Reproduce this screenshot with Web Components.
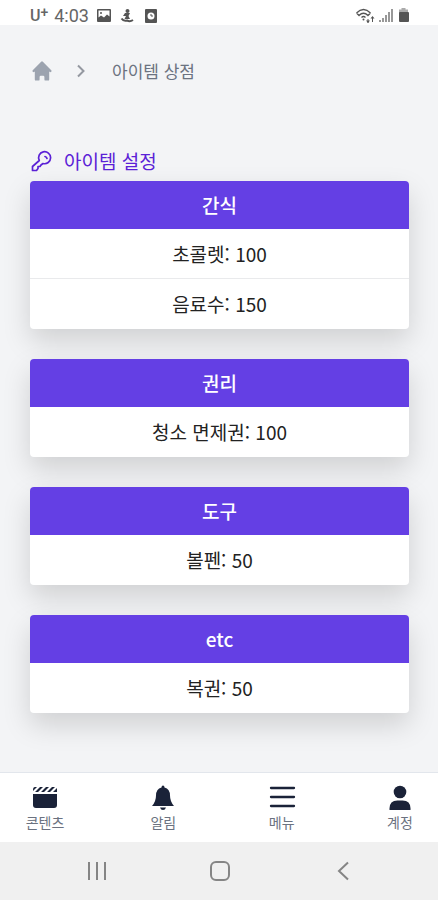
<!DOCTYPE html>
<html lang="ko">
<head>
<meta charset="utf-8">
<meta name="viewport" content="width=device-width, initial-scale=1">
<title>아이템 상점</title>
<style>
  body {
    margin: 0;
    font-family: 'Noto Sans CJK KR', sans-serif;
    color: #1f2937;
    background-color: #f3f4f6;
  }
</style>
</head>
<body>
<shop-app>
  <status-bar slot="top" carrier="U" time="4:03"></status-bar>
  <bread-crumb slot="crumb" page="아이템 상점"></bread-crumb>
  <section-title slot="title">아이템 설정</section-title>
  <item-card name="간식">
    <item-row>초콜렛: 100</item-row>
    <item-row>음료수: 150</item-row>
  </item-card>
  <item-card name="권리">
    <item-row>청소 면제권: 100</item-row>
  </item-card>
  <item-card name="도구">
    <item-row>볼펜: 50</item-row>
  </item-card>
  <item-card name="etc">
    <item-row>복권: 50</item-row>
  </item-card>
  <tab-bar slot="bottom">
    <tab-item icon="contents">콘텐츠</tab-item>
    <tab-item icon="bell">알림</tab-item>
    <tab-item icon="menu">메뉴</tab-item>
    <tab-item icon="user">계정</tab-item>
  </tab-bar>
  <system-bar slot="bottom"></system-bar>
</shop-app>

<script>
class BaseElement extends HTMLElement {
  constructor() {
    super();
    this.attachShadow({ mode: 'open' });
  }

  connectedCallback() {
    this.render();
  }
}

class ShopApp extends BaseElement {
  render() {
    this.shadowRoot.innerHTML = `
      <style>
        :host {
          display: flex;
          flex-direction: column;
          min-height: 100vh;
        }

        main {
          flex: 1;
          padding: 32px 29px 32px 30px;
        }

        .cards {
          display: flex;
          flex-direction: column;
          gap: 30px;
        }
      </style>
      <slot name="top"></slot>
      <main>
        <slot name="crumb"></slot>
        <slot name="title"></slot>
        <div class="cards"><slot></slot></div>
      </main>
      <slot name="bottom"></slot>
    `;
  }
}

class StatusBar extends BaseElement {
  render() {
    this.shadowRoot.innerHTML = `
      <style>
        :host {
          display: flex;
          align-items: center;
          justify-content: space-between;
          box-sizing: border-box;
          height: 25px;
          padding: 7px 28px 0 30px;
          background-color: #fff;
          color: #666;
          font-family: Roboto, sans-serif;
          font-size: 18px;
          line-height: 18px;
        }

        .group {
          display: flex;
          align-items: center;
        }

        .carrier {
          font-size: 16px;
          font-weight: 500;
        }

        sup {
          font-size: 14px;
          line-height: 0;
          vertical-align: 4px;
        }

        .left { gap: 6px; }
        .right { gap: 4px; }

        svg { display: block; }
      </style>
      <div class="group left">
        <span class="carrier">${this.getAttribute('carrier')}<sup>+</sup></span>
        <span>${this.getAttribute('time')}</span>
        <svg width="18" height="16" viewBox="0 0 18 16">
          <path fill="#555" fill-rule="evenodd" d="M3 1h12q1 0 1 1v11q0 1-1 1H3q-1 0-1-1V2q0-1 1-1zm.5 1.500v7l2.500-2 3 2 3-3 2.500 2v-6z"/>
          <circle cx="6" cy="5" r="1" fill="#555"/>
        </svg>
        <svg width="16" height="16" viewBox="0 0 16 16" fill="#555">
          <circle cx="8.500" cy="3" r="2"/>
          <path d="M6 5h5L9.500 8l1.500 3H5.500L7 8 4 8z"/>
          <path d="M2.500 10.500q2 3 5.500 2 3 1.500 6-.5" fill="none" stroke="#555" stroke-width="2"/>
        </svg>
        <svg width="18" height="16" viewBox="0 0 18 16">
          <rect x="4" y="1" width="12" height="14" rx="1" fill="#555"/>
          <circle cx="10" cy="8" r="3.500" fill="#fff"/>
          <path d="M10 6v2h2" fill="none" stroke="#555"/>
        </svg>
      </div>
      <div class="group right">
        <svg width="20" height="16" viewBox="0 0 20 16" fill="none" stroke="#555" stroke-width="1.300">
          <path d="M1.500 5Q8.500-2 15.500 5M4 7.500Q8.500 3 13 7.500M6.500 9.500Q8.500 7.500 10.500 9.500M1.500 5l3 3M15.500 5l-3 3"/>
          <circle cx="8.500" cy="11.500" r="1" fill="#555" stroke="none"/>
          <path d="M13 11v4M17.500 9v5" stroke-width="1"/>
          <path d="M11 12.500h4l-2 2.500zM15.500 10.500h4l-2-2.500z" fill="#555" stroke="none"/>
        </svg>
        <svg width="14" height="16" viewBox="0 0 14 16" stroke="#777" stroke-width="1.500">
          <path d="M1 12v2M4 10v4M7 7v7M10 4v10M13 1v13"/>
        </svg>
        <svg width="13" height="16" viewBox="0 0 13 16">
          <path fill="#aaa" d="M4.500 0h4v1.500H11V6H2V1.500h2.500z"/>
          <rect x="2" y="4" width="10" height="10" rx="1" fill="#555"/>
        </svg>
      </div>
    `;
  }
}

class BreadCrumb extends BaseElement {
  render() {
    this.shadowRoot.innerHTML = `
      <style>
        :host { display: block; }

        nav {
          display: flex;
          align-items: center;
          height: 28px;
          font-size: 17px;
          line-height: 24px;
          color: #6b7280;
        }

        a {
          color: inherit;
          text-decoration: none;
        }

        .home svg {
          display: block;
          fill: #9ca3af;
        }

        .arrow {
          margin: 0 21px 0 17px;
          fill: none;
          stroke: #9498a0;
          stroke-width: 2;
        }
      </style>
      <nav aria-label="breadcrumb">
        <a class="home" href="#" aria-label="홈">
          <svg width="24" height="24" viewBox="0 0 20 20"><path d="M10.707 2.293a1 1 0 00-1.414 0l-7 7a1 1 0 001.414 1.414L4 10.414V17a1 1 0 001 1h2a1 1 0 001-1v-2a1 1 0 011-1h2a1 1 0 011 1v2a1 1 0 001 1h2a1 1 0 001-1v-6.586l.293.293a1 1 0 001.414-1.414l-7-7z"/></svg>
        </a>
        <svg class="arrow" width="20" height="20" viewBox="0 0 20 20"><path d="M7 4.500 12.500 10 7 15.500"/></svg>
        <a href="#" aria-current="page">${this.getAttribute('page')}</a>
      </nav>
    `;
  }
}

class SectionTitle extends BaseElement {
  render() {
    this.shadowRoot.innerHTML = `
      <style>
        :host {
          display: block;
          margin-top: 62px;
        }

        h2 {
          display: flex;
          align-items: center;
          gap: 10px;
          margin: 0;
          padding-bottom: 6px;
          font-size: 19px;
          font-weight: 400;
          line-height: 28px;
          color: #5b21d6;
        }
      </style>
      <h2>
        <svg width="24" height="24" viewBox="0 0 24 24" fill="none" stroke="currentColor" stroke-width="1.700" stroke-linecap="round" stroke-linejoin="round">
          <path d="M15 7.500a2.500 2.500 0 0 1 2 2"/>
          <path d="M9.300 11.500 2.500 17.500v4h4l1.500-2v-2h2l1-1.500 2-1.500a6 6 0 1 0-3.700-3z"/>
        </svg>
        <span><slot></slot></span>
      </h2>
    `;
  }
}

class ItemCard extends BaseElement {
  render() {
    this.shadowRoot.innerHTML = `
      <style>
        :host {
          display: block;
          border-radius: 4px;
          background-color: #fff;
          box-shadow: 0 12px 28px rgba(0, 0, 0, 0.15);
          text-align: center;
        }

        h3 {
          margin: 0;
          border-radius: 4px 4px 0 0;
          background-color: #643fe4;
          color: #fff;
          font-size: 19px;
          font-weight: 500;
          line-height: 48px;
        }
      </style>
      <h3>${this.getAttribute('name')}</h3>
      <slot></slot>
    `;
  }
}

class ItemRow extends BaseElement {
  render() {
    this.shadowRoot.innerHTML = `
      <style>
        :host {
          display: block;
          box-sizing: border-box;
          height: 50px;
          border-bottom: 1px solid #e9eaec;
          font-size: 19px;
          line-height: 50px;
          color: #222;
        }

        :host(:last-child) { border-bottom: 0; }
      </style>
      <slot></slot>
    `;
  }
}

class TabBar extends BaseElement {
  render() {
    this.shadowRoot.innerHTML = `
      <style>
        :host { display: block; }

        nav {
          display: flex;
          justify-content: space-between;
          box-sizing: border-box;
          height: 70px;
          padding: 11px 18px 0 25px;
          border-top: 1px solid #e2e6ec;
          background-color: #fff;
        }
      </style>
      <nav><slot></slot></nav>
    `;
  }
}

const TAB_ICONS = {
  contents: `
    <path d="M2 10h24v11q0 3-3 3H5q-3 0-3-3z"/>
    <path d="M2 6q0-3 2-3h2L2 7zM4 8l5-5h3L7 8zM10 8l5-5h3l-5 5zM16 8l5-5h3l-5 5zM22 8l4-4v4z"/>
  `,
  bell: `
    <path d="M14 1.500q1.500 0 1.500 2 5.500 1.500 5.500 8 0 6 4 10.500H3q4-4.500 4-10.500 0-6.500 5.500-8 0-2 1.500-2z"/>
    <path d="M11 23.500h6q-.8 2.500-3 2.500t-3-2.500z"/>
  `,
  menu: `<path d="M3 4h23M3 13h23M3 22h23" stroke="currentColor" stroke-width="2.300" stroke-linecap="round"/>`,
  user: `
    <circle cx="14" cy="8" r="6.300"/>
    <path d="M3.500 26v-1.500q0-8 8-8h5q8 0 8 8V26z"/>
  `,
};

class TabItem extends BaseElement {
  render() {
    this.shadowRoot.innerHTML = `
      <style>
        :host { display: block; }

        a {
          display: flex;
          flex-direction: column;
          align-items: center;
          width: 40px;
          font-size: 14px;
          line-height: 20px;
          white-space: nowrap;
          color: #6b7280;
          text-decoration: none;
        }

        svg {
          fill: currentColor;
          color: #1a2238;
        }
      </style>
      <a href="#">
        <svg width="28" height="28" viewBox="0 0 28 28">${TAB_ICONS[this.getAttribute('icon')]}</svg>
        <slot></slot>
      </a>
    `;
  }
}

class SystemBar extends BaseElement {
  render() {
    this.shadowRoot.innerHTML = `
      <style>
        :host {
          display: grid;
          grid-template-columns: repeat(3, 1fr);
          align-items: center;
          height: 58px;
          padding: 0 34px 0 36px;
          background-color: #f0f0f0;
        }

        button {
          display: flex;
          justify-content: center;
          padding: 0;
          border: 0;
          background: none;
        }

        svg {
          fill: none;
          stroke: #858585;
          stroke-width: 2;
        }
      </style>
      <button aria-label="최근 앱"><svg width="24" height="24" viewBox="0 0 24 24"><path d="M4 3v18M12 3v18M20 3v18"/></svg></button>
      <button aria-label="홈"><svg width="24" height="24" viewBox="0 0 24 24"><rect x="3" y="3" width="18" height="18" rx="5"/></svg></button>
      <button aria-label="뒤로"><svg width="24" height="24" viewBox="0 0 24 24"><path d="M17 3.500 8 12l9 8.500"/></svg></button>
    `;
  }
}

customElements.define('shop-app', ShopApp);
customElements.define('status-bar', StatusBar);
customElements.define('bread-crumb', BreadCrumb);
customElements.define('section-title', SectionTitle);
customElements.define('item-card', ItemCard);
customElements.define('item-row', ItemRow);
customElements.define('tab-bar', TabBar);
customElements.define('tab-item', TabItem);
customElements.define('system-bar', SystemBar);
</script>
</body>
</html>
